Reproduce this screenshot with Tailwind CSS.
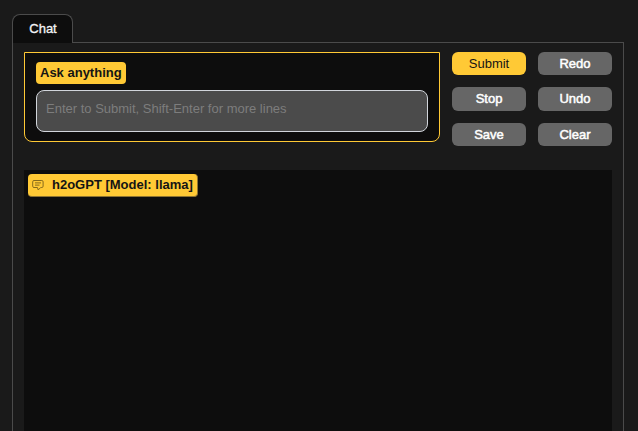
<!DOCTYPE html>
<html lang="en">
<head>
<meta charset="utf-8">
<title>Chat</title>
<script src="https://cdn.jsdelivr.net/npm/@tailwindcss/browser@4"></script>
</head>
<body class="h-[431px] overflow-hidden bg-[#1a1a1a] pl-3 pt-3.5 font-['Liberation_Sans',Arial,sans-serif] text-[13px] leading-5 text-white">
<nav class="flex w-[612px] items-end">
<button class="h-[29px] w-[61px] rounded-t-lg border border-b-0 border-[#4b4b4b] bg-[#0d0d0d] pb-px pl-px text-center text-gray-100 [-webkit-text-stroke:0.3px]">Chat</button>
<div class="h-px flex-1 bg-[#4b4b4b]"></div>
</nav>
<main class="h-[400px] w-[612px] border-x border-[#4b4b4b] px-[11px] pt-[9px]">
<section class="flex gap-3">
<div class="h-[90px] w-[416px] rounded-b-lg border border-[#ffc935] bg-[#0d0d0d] px-[11px] pt-[9px]">
<label for="q" class="block h-[22px] w-[90px] rounded bg-[#ffc935] pl-1 font-bold leading-[21px] whitespace-nowrap text-[#141414]">Ask anything</label>
<textarea id="q" class="mt-1.5 block h-[42px] w-[392px] resize-none overflow-hidden rounded-lg border border-[#d1d5db] bg-[#4b4b4b] px-[9px] pt-2 leading-5 placeholder:text-[#7d7d7d]" placeholder="Enter to Submit, Shift-Enter for more lines"></textarea>
</div>
<div class="grid h-[94px] w-40 grid-cols-2 grid-rows-[23px_24px_23px] gap-3 [-webkit-text-stroke:0.5px]">
<button class="rounded-md bg-[#ffc935] text-[#141414] [-webkit-text-stroke:0px]">Submit</button>
<button class="rounded-md bg-[#666]">Redo</button>
<button class="rounded-md bg-[#666]">Stop</button>
<button class="rounded-md bg-[#666]">Undo</button>
<button class="rounded-md bg-[#666]">Save</button>
<button class="rounded-md bg-[#666]">Clear</button>
</div>
</section>
<section class="mt-6 h-[270px] w-[588px] bg-[#0d0d0d] pl-1 pt-1">
<div class="flex h-[23px] w-[170px] items-center rounded border-r border-b border-[#8f7430] bg-[#ffc935] pl-1 font-bold whitespace-nowrap text-[#141414]">
<svg class="mr-2 h-3 w-3 shrink-0" viewBox="0 0 12 12" fill="none" stroke="#866a1c" stroke-width="1" stroke-linejoin="round"><path d="M5.5 8.5H2A1.3 1.3 0 0 1 .7 7.2V2.8A1.3 1.3 0 0 1 2 1.5h7.8a1.3 1.3 0 0 1 1.3 1.3v4.4a1.3 1.3 0 0 1-1.3 1.3H8.7L6.2 11 5.5 8.5M3 3.9h6M3 6.1h4.5"/></svg>
<span class="-mt-px">h2oGPT [Model: llama]</span>
</div>
</section>
</main>
</body>
</html>
